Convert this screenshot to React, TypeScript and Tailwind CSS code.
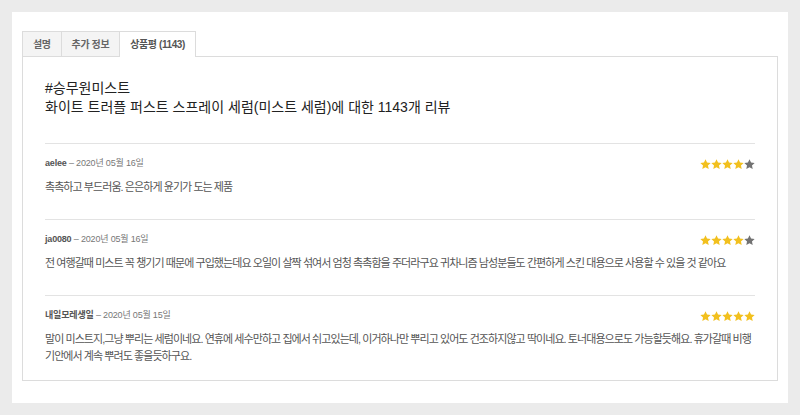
import { Fragment } from "react";

type Review = {
  author: string;
  date: string;
  rating: number;
  text: string;
};

const reviews: Review[] = [
  {
    author: "aelee",
    date: "2020년 05월 16일",
    rating: 4,
    text: "촉촉하고 부드러움. 은은하게 윤기가 도는 제품",
  },
  {
    author: "ja0080",
    date: "2020년 05월 16일",
    rating: 4,
    text: "전 여행갈때 미스트 꼭 챙기기 때문에 구입했는데요 오일이 살짝 섞여서 엄청 촉촉함을 주더라구요 귀차니즘 남성분들도 간편하게 스킨 대용으로 사용할 수 있을 것 같아요",
  },
  {
    author: "내일모레생일",
    date: "2020년 05월 15일",
    rating: 5,
    text: "말이 미스트지,그냥 뿌리는 세럼이네요. 연휴에 세수만하고 집에서 쉬고있는데, 이거하나만 뿌리고 있어도 건조하지않고 딱이네요. 토너대용으로도 가능할듯해요. 휴가갈때 비행기안에서 계속 뿌려도 좋을듯하구요.",
  },
];

function Star({ filled }: { filled: boolean }) {
  return (
    <svg viewBox="0 0 24 24" className="w-[11px] h-[11px]" fill={filled ? "#f2c01e" : "#727272"}>
      <path d="M12 0.8l3.4 7.1 7.8.9-5.8 5.4 1.6 7.8L12 18.1l-7 3.9 1.6-7.8L0.8 8.8l7.8-.9z" />
    </svg>
  );
}

function Stars({ rating }: { rating: number }) {
  return (
    <div className="flex">
      {[1, 2, 3, 4, 5].map((n) => (
        <Star key={n} filled={n <= rating} />
      ))}
    </div>
  );
}

export default function App() {
  const tabs = ["설명", "추가 정보", "상품평 (1143)"];

  return (
    <div
      className="w-[800px] h-[415px] bg-[#ebebeb] p-3"
      style={{ fontFamily: '"Liberation Sans", "Noto Sans CJK KR", sans-serif' }}
    >
      <div className="bg-white h-[391px] pt-[19px] px-[10px]">
        {/* tabs */}
        <div className="flex h-[26px]">
          {tabs.map((t, i) => {
            const active = i === tabs.length - 1;
            return (
              <div
                key={t}
                className={
                  active
                    ? "relative z-10 flex items-center px-[10px] border border-b-0 border-[#dcdcdc] bg-white text-[10px] font-bold text-[#555] tracking-[-0.04em]"
                    : "flex items-center px-[10px] border border-r-0 border-[#dcdcdc] bg-[#f4f4f4] text-[10px] font-bold text-[#666] tracking-[-0.04em]"
                }
              >
                {t}
              </div>
            );
          })}
        </div>

        {/* panel */}
        <div className="-mt-px border border-[#dcdcdc] h-[325px] px-[22px] pt-[22px]">
          <h2 className="text-[14px] leading-[19px] text-[#222] pb-[26px]">
            #승무원미스트
            <br />
            화이트 트러플 퍼스트 스프레이 세럼(미스트 세럼)에 대한 1143개 리뷰
          </h2>

          {reviews.map((r, i) => (
            <Fragment key={r.author}>
              <div
                className={
                  "border-t border-[#e3e3e3] pt-[13px] " + (i === reviews.length - 1 ? "pb-0" : "pb-[23px]")
                }
              >
                <div className="flex items-center justify-between h-[14px]">
                  <div className="text-[9px] text-[#777] tracking-[-0.02em]">
                    <span className="font-bold text-[#555]">{r.author}</span> – {r.date}
                  </div>
                  <Stars rating={r.rating} />
                </div>
                <p className="mt-[8px] text-[11px] leading-[17px] text-[#555] tracking-[-0.085em]">{r.text}</p>
              </div>
            </Fragment>
          ))}
        </div>
      </div>
    </div>
  );
}
